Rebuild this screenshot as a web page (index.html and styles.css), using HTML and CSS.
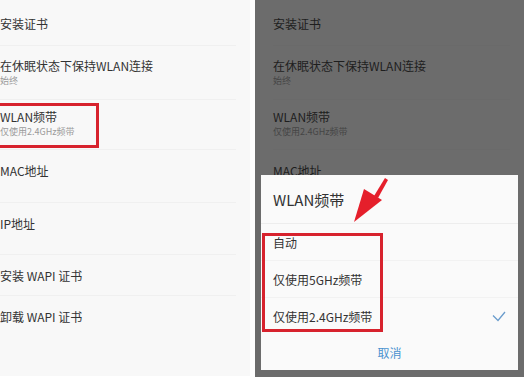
FILE: index.html
```html
<!DOCTYPE html>
<html lang="zh-CN">
<head>
    <meta charset="UTF-8">
    <title>WLAN频带</title>
    <link rel="stylesheet" href="styles.css">
</head>
<body>
    <div class="screens">
        <!-- 左侧：设置列表 -->
        <div class="panel panel-light">
            <div class="row row-a"><div class="row-title">安装证书</div></div>
            <div class="row row-b">
                <div class="row-title">在休眠状态下保持WLAN连接</div>
                <div class="row-sub">始终</div>
            </div>
            <div class="row row-c">
                <div class="row-title">WLAN频带</div>
                <div class="row-sub">仅使用2.4GHz频带</div>
            </div>
            <div class="row row-d"><div class="row-title">MAC地址</div></div>
            <div class="row row-e"><div class="row-title">IP地址</div></div>
            <div class="row row-f"><div class="row-title">安装 WAPI 证书</div></div>
            <div class="row row-g"><div class="row-title">卸载 WAPI 证书</div></div>

            <div class="mark mark-left"></div>
        </div>

        <!-- 右侧：弹出选择框 -->
        <div class="panel panel-dim">
            <div class="row row-a"><div class="row-title">安装证书</div></div>
            <div class="row row-b">
                <div class="row-title">在休眠状态下保持WLAN连接</div>
                <div class="row-sub">始终</div>
            </div>
            <div class="row row-c">
                <div class="row-title">WLAN频带</div>
                <div class="row-sub">仅使用2.4GHz频带</div>
            </div>
            <div class="row row-d"><div class="row-title">MAC地址</div></div>

            <div class="dialog">
                <div class="dialog-title">WLAN频带</div>
                <div class="option">自动</div>
                <div class="option">仅使用5GHz频带</div>
                <div class="option option-last">
                    <span>仅使用2.4GHz频带</span>
                    <svg class="check" width="14" height="11" viewBox="0 0 14 11">
                        <path d="M1 4.5 L6 9.5 L13 1" fill="none" stroke="#6a9ccc" stroke-width="1.3"/>
                    </svg>
                </div>
                <div class="dialog-cancel">取消</div>
            </div>

            <div class="mark mark-right"></div>

            <svg class="arrow" width="40" height="50" viewBox="0 0 40 50">
                <path d="M33 2 L36 4 L26 22 L22 20 Z" fill="#e51f2b"/>
                <path d="M12 13 L30 24 L2 46 Z" fill="#e51f2b"/>
            </svg>
        </div>
    </div>
</body>
</html>
```

FILE: styles.css
```css
* {
    margin: 0;
    padding: 0;
    box-sizing: border-box;
}

body {
    background: #ffffff;
    font-family: "Noto Sans CJK SC", "Noto Sans", sans-serif;
    color: #333;
}

.screens {
    display: flex;
    gap: 5px;
    width: 524px;
}

.panel {
    position: relative;
    height: 377px;
    overflow: hidden;
}

.panel-light {
    width: 250px;
    height: 376px;
    background: #f8f8f8;
}

.panel-dim {
    width: 269px;
    background: #6c6c6c;
    padding-left: 18px;
}

.row {
    margin-right: 14px;
    border-bottom: 1px solid #f0f0f0;
}

.panel-dim .row {
    border-bottom-color: #6a6a6a;
}

.row-title {
    font-size: 12px;
    line-height: 18px;
    white-space: nowrap;
}

.row-sub {
    font-size: 9px;
    line-height: 12px;
    color: #9a9a9a;
    white-space: nowrap;
}

.panel-dim .row-title {
    color: #1e1e1e;
}

.panel-dim .row-sub {
    color: #454545;
}

.row-a { height: 46px; padding-top: 15px; }
.row-b { height: 54px; padding-top: 11px; }
.row-c { height: 50px; padding-top: 8px; }
.row-d { height: 53px; padding-top: 12px; }
.row-e { height: 52px; padding-top: 12px; }
.row-f { height: 41px; padding-top: 12px; }
.row-g { padding-top: 12px; border-bottom: none; }

.dialog {
    position: absolute;
    left: 6px;
    top: 175px;
    width: 257px;
    height: 195px;
    background: #fafafa;
    display: flex;
    flex-direction: column;
}

.dialog-title {
    height: 49px;
    padding: 15px 12px 0;
    font-size: 15px;
    line-height: 20px;
    color: #333;
    border-bottom: 1px solid #ededed;
}

.option {
    height: 37px;
    padding: 0 12px;
    display: flex;
    align-items: center;
    justify-content: space-between;
    font-size: 12px;
    color: #333;
    border-bottom: 1px solid #f2f2f2;
}

.option:first-of-type {
    height: 38px;
}

.option-last {
    border-bottom: none;
}

.dialog-cancel {
    flex: 1;
    display: flex;
    align-items: center;
    justify-content: center;
    font-size: 12px;
    color: #4a92cf;
}

.mark {
    position: absolute;
    border: 3px solid #d7222d;
}

.mark-left {
    left: -3px;
    top: 103px;
    width: 102px;
    height: 45px;
}

.mark-right {
    left: 7px;
    top: 233px;
    width: 121px;
    height: 99px;
}

.arrow {
    position: absolute;
    left: 97px;
    top: 176px;
}
```
